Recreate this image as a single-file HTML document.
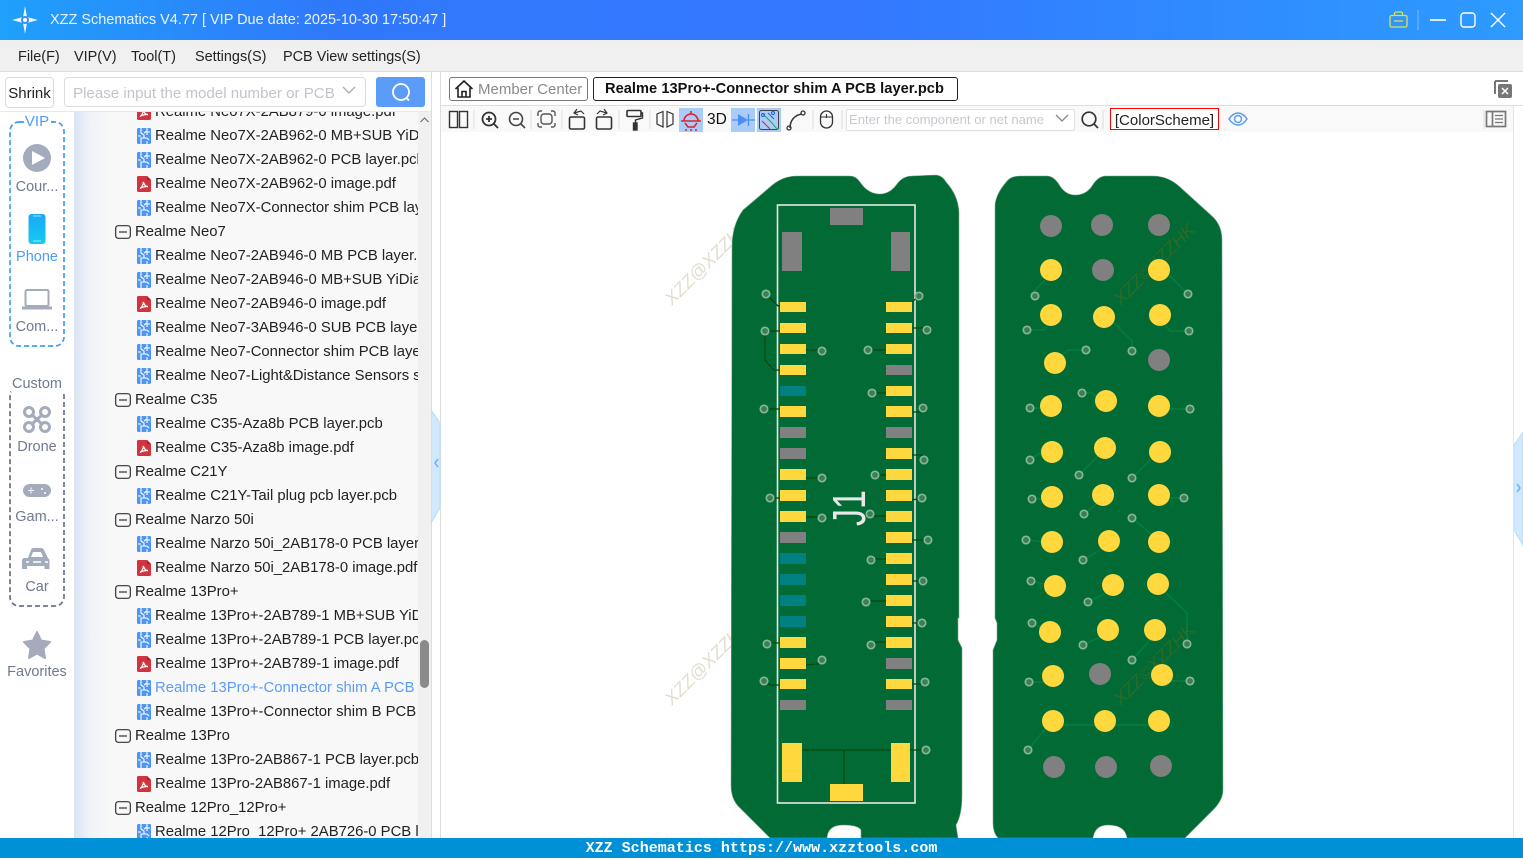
<!DOCTYPE html>
<html><head><meta charset="utf-8"><title>XZZ Schematics</title>
<style>
html,body{margin:0;padding:0;width:1523px;height:858px;overflow:hidden;background:#fff;font-family:"Liberation Sans","Noto Sans CJK SC",sans-serif}
.a{position:absolute;white-space:nowrap}
#title{left:0;top:0;width:1523px;height:40px;background:linear-gradient(90deg,#1fa0fb 0,#3078fb 22%,#3377ff 55%,#2d9bff 100%)}
#menu{left:0;top:40px;width:1523px;height:31px;background:#f0f0f0;border-bottom:1px solid #dcdcdc;font-size:14.45px;color:#222}
#menu span{position:absolute;top:9px}
#tree{left:74px;top:112px;width:344px;height:726px;overflow:hidden;background:linear-gradient(90deg,#dae3f3 0,#f1f3f8 16px,#f8f8f8 38px,#f8f8f8 100%)}
.r{position:absolute;font-size:14.85px;line-height:24px;height:24px;color:#222;white-space:nowrap;overflow:hidden;margin-top:1px}
.c{left:81px;width:263px}.f{left:41px}
.s{position:absolute;color:#6f7a90;font-size:14.5px;text-align:center;width:74px;left:0;margin-top:2px}
</style></head><body>
<svg width="0" height="0" style="position:absolute"><defs>
<symbol id="p" viewBox="0 0 14 16"><rect width="14" height="16" rx="1.5" fill="#4f95f5"/><path d="M4 0v5l3 2v3H4v6M10 0v3L7 5M13 4H10v3M7 10h3l2 2M1 8h3M10 16v-3" fill="none" stroke="#fff" stroke-width="1.1"/></symbol>
<symbol id="d" viewBox="0 0 14 16"><path d="M1.5 0H10l4 4v10.500a1.500 1.500 0 0 1-1.500 1.500h-11A1.500 1.500 0 0 1 0 14.500V1.500A1.500 1.500 0 0 1 1.500 0z" fill="#d1343f"/><path d="M10 0l4 4h-4z" fill="#a01f2a"/><path d="M3 12.500c2-1 3-4 3.500-6.500.5 3 2 4.500 4.500 4.500-3 0-6 .5-8 2z" fill="none" stroke="#fff" stroke-width="1.200"/></symbol>
<symbol id="m" viewBox="0 0 16 14"><rect x=".7" y=".7" width="14.600" height="12.600" rx="2.500" fill="none" stroke="#333" stroke-width="1.200"/><path d="M4 7h8" stroke="#333" stroke-width="1.200"/></symbol>
</defs></svg>

<div class="a" id="title"></div>
<svg class="a" style="left:0;top:0" width="60" height="40"><path d="M25 6l2 11 11 3-11 3-2 11-2-11-11-3 11-3z" fill="#eaf4ff"/><circle cx="25" cy="20" r="4" fill="#3a8df8"/><circle cx="25" cy="20" r="2" fill="#fff"/></svg>
<div class="a" style="left:50px;top:12px;color:#eaf3ff;font-size:14.48px">XZZ Schematics V4.77 [ VIP Due date: 2025-10-30 17:50:47 ]</div>
<svg class="a" style="left:1380px;top:0" width="143" height="40" fill="none"><path d="M11.500 15.500h14a1.500 1.500 0 0 1 1.500 1.500v8.500a1.500 1.500 0 0 1-1.500 1.500h-14a1.500 1.500 0 0 1-1.500-1.500V17a1.500 1.500 0 0 1 1.500-1.500zM14.500 15.500v-2a1.500 1.500 0 0 1 1.500-1.500h5a1.500 1.500 0 0 1 1.500 1.500v2M14 21h9" stroke="#d8e34a" stroke-width="1.300"/><path d="M38 10v20" stroke="#7dbcff"/><path d="M50 20h16" stroke="#fff" stroke-width="1.600"/><rect x="81" y="13" width="14" height="14" rx="3" stroke="#fff" stroke-width="1.400"/><path d="M111 13l14 14M125 13l-14 14" stroke="#fff" stroke-width="1.400"/></svg>

<div class="a" id="menu"><span style="left:18px">File(F)</span><span style="left:74px">VIP(V)</span><span style="left:131px">Tool(T)</span><span style="left:195px">Settings(S)</span><span style="left:283px">PCB View settings(S)</span></div>

<!-- left header -->
<div class="a" style="left:5px;top:77px;width:47px;height:29px;border:1px solid #dcdcdc;border-radius:4px;font-size:15px;line-height:31px;text-align:center;color:#222;box-sizing:content-box">Shrink</div>
<div class="a" style="left:64px;top:77px;width:300px;height:28px;border:1px solid #dcdcdc;border-radius:4px;font-size:15.1px;line-height:31px;color:#c0c4cc;text-indent:8px">Please input the model number or PCB</div>
<svg class="a" style="left:341px;top:85px" width="16" height="12"><path d="M2 2l6 6 6-6" fill="none" stroke="#aab" stroke-width="1.300"/></svg>
<div class="a" style="left:376px;top:77px;width:49px;height:30px;background:#5a9cf8;border-radius:3px"></div>
<svg class="a" style="left:388px;top:80px" width="26" height="24" fill="none"><circle cx="13" cy="12" r="8" stroke="#fff" stroke-width="1.800"/><path d="M18.500 18l2.500 2.500" stroke="#fff" stroke-width="1.800"/></svg>
<div class="a" style="left:0;top:111px;width:431px;height:1px;background:#e8e8e8"></div>

<!-- side nav -->
<div class="a" style="left:0;top:112px;width:74px;height:726px;background:#fff">
<svg class="a" style="left:0;top:0" width="74" height="500" fill="none" stroke-width="1.700" stroke-dasharray="5 3"><rect x="10" y="10" width="54" height="224" rx="9" stroke="#3d9bf5"/><rect x="10" y="275" width="54" height="219" rx="9" stroke="#687389"/></svg>
<div class="s" style="top:-1px;color:#4d9cf5;font-size:15px"><span style="background:#fff;padding:0 1px">VIP</span></div>
<div class="s" style="top:65px">Cour...</div>
<div class="s" style="top:135px;color:#4d9cf5">Phone</div>
<div class="s" style="top:205px">Com...</div>
<div class="s" style="top:262px;font-size:14.5px"><span style="background:#fff;padding:0 1px">Custom</span></div>
<div class="s" style="top:325px">Drone</div>
<div class="s" style="top:395px">Gam...</div>
<div class="s" style="top:465px">Car</div>
<div class="s" style="top:550px">Favorites</div>
</div>
<svg class="a" style="left:0;top:112px" width="74" height="726">
<circle cx="37" cy="46" r="14" fill="#a3abbd"/><path d="M32 39l13 7-13 7z" fill="#fff"/>
<defs><linearGradient id="ph" x1="0" y1="0" x2="0" y2="1"><stop offset="0" stop-color="#1ca8f8"/><stop offset="1" stop-color="#14cbf0"/></linearGradient></defs>
<rect x="28.500" y="102" width="17" height="30" rx="3" fill="url(#ph)"/><path d="M33 104h8M33 129h8" stroke="#9fe6ff"/>
<rect x="25.500" y="178" width="23" height="16" rx="1.500" fill="none" stroke="#a3abbd" stroke-width="2"/><path d="M22 196h30" stroke="#a3abbd" stroke-width="3"/>
<g fill="none" stroke="#a3abbd" stroke-width="3"><circle cx="29" cy="300" r="4.500"/><circle cx="45" cy="300" r="4.500"/><circle cx="29" cy="315" r="4.500"/><circle cx="45" cy="315" r="4.500"/><path d="M31 302l12 11M43 302l-12 11"/></g>
<rect x="23" y="372" width="28" height="13" rx="6.500" fill="#a3abbd"/><path d="M28 378.500h6M31 375.500v6" stroke="#fff"/><circle cx="42" cy="377" r="1" fill="#fff"/><circle cx="45" cy="381" r="1" fill="#fff"/>
<path d="M28 446l3-8q.5-2 3-2h7q2.500 0 3 2l4 8q1.500 1 1.500 3v8h-5v-3H27v3h-5v-8q0-2 1.500-3z" fill="#a3abbd"/><path d="M31 445l2-5h8l2 5z" fill="#fff"/><path d="M26 450h3M45 450h3M33 450h8" stroke="#fff" stroke-width="1.500"/>
<path d="M37 520l4 8.500 9 1.500-6.500 6.500 1.500 9.500-8-4.500-8 4.500 1.500-9.500-6.500-6.500 9-1.500z" fill="#a3abbd" stroke="#a3abbd" stroke-width="2" stroke-linejoin="round"/>
</svg>

<!-- tree -->
<div class="a" id="tree">
<div class="r c" style="top:-13px"><svg width="14" height="16" style="position:absolute;left:-18px;top:4px"><use href="#d"/></svg>Realme Neo7X-2AB879-0 image.pdf</div>
<div class="r c" style="top:11px"><svg width="14" height="16" style="position:absolute;left:-18px;top:4px"><use href="#p"/></svg>Realme Neo7X-2AB962-0 MB+SUB YiDiagram layer.pcb</div>
<div class="r c" style="top:35px"><svg width="14" height="16" style="position:absolute;left:-18px;top:4px"><use href="#p"/></svg>Realme Neo7X-2AB962-0 PCB layer.pcb</div>
<div class="r c" style="top:59px"><svg width="14" height="16" style="position:absolute;left:-18px;top:4px"><use href="#d"/></svg>Realme Neo7X-2AB962-0 image.pdf</div>
<div class="r c" style="top:83px"><svg width="14" height="16" style="position:absolute;left:-18px;top:4px"><use href="#p"/></svg>Realme Neo7X-Connector shim PCB layer.pcb</div>
<div class="r f" style="top:107px;padding-left:20px"><svg width="16" height="14" style="position:absolute;left:0;top:5px"><use href="#m"/></svg>Realme Neo7</div>
<div class="r c" style="top:131px"><svg width="14" height="16" style="position:absolute;left:-18px;top:4px"><use href="#p"/></svg>Realme Neo7-2AB946-0 MB PCB layer.pcb</div>
<div class="r c" style="top:155px"><svg width="14" height="16" style="position:absolute;left:-18px;top:4px"><use href="#p"/></svg>Realme Neo7-2AB946-0 MB+SUB YiDiagram.pcb</div>
<div class="r c" style="top:179px"><svg width="14" height="16" style="position:absolute;left:-18px;top:4px"><use href="#d"/></svg>Realme Neo7-2AB946-0 image.pdf</div>
<div class="r c" style="top:203px"><svg width="14" height="16" style="position:absolute;left:-18px;top:4px"><use href="#p"/></svg>Realme Neo7-3AB946-0 SUB PCB layer.pcb</div>
<div class="r c" style="top:227px"><svg width="14" height="16" style="position:absolute;left:-18px;top:4px"><use href="#p"/></svg>Realme Neo7-Connector shim PCB layer.pcb</div>
<div class="r c" style="top:251px"><svg width="14" height="16" style="position:absolute;left:-18px;top:4px"><use href="#p"/></svg>Realme Neo7-Light&amp;Distance Sensors shim.pcb</div>
<div class="r f" style="top:275px;padding-left:20px"><svg width="16" height="14" style="position:absolute;left:0;top:5px"><use href="#m"/></svg>Realme C35</div>
<div class="r c" style="top:299px"><svg width="14" height="16" style="position:absolute;left:-18px;top:4px"><use href="#p"/></svg>Realme C35-Aza8b PCB layer.pcb</div>
<div class="r c" style="top:323px"><svg width="14" height="16" style="position:absolute;left:-18px;top:4px"><use href="#d"/></svg>Realme C35-Aza8b image.pdf</div>
<div class="r f" style="top:347px;padding-left:20px"><svg width="16" height="14" style="position:absolute;left:0;top:5px"><use href="#m"/></svg>Realme C21Y</div>
<div class="r c" style="top:371px"><svg width="14" height="16" style="position:absolute;left:-18px;top:4px"><use href="#p"/></svg>Realme C21Y-Tail plug pcb layer.pcb</div>
<div class="r f" style="top:395px;padding-left:20px"><svg width="16" height="14" style="position:absolute;left:0;top:5px"><use href="#m"/></svg>Realme Narzo 50i</div>
<div class="r c" style="top:419px"><svg width="14" height="16" style="position:absolute;left:-18px;top:4px"><use href="#p"/></svg>Realme Narzo 50i_2AB178-0 PCB layer.pcb</div>
<div class="r c" style="top:443px"><svg width="14" height="16" style="position:absolute;left:-18px;top:4px"><use href="#d"/></svg>Realme Narzo 50i_2AB178-0 image.pdf</div>
<div class="r f" style="top:467px;padding-left:20px"><svg width="16" height="14" style="position:absolute;left:0;top:5px"><use href="#m"/></svg>Realme 13Pro+</div>
<div class="r c" style="top:491px"><svg width="14" height="16" style="position:absolute;left:-18px;top:4px"><use href="#p"/></svg>Realme 13Pro+-2AB789-1 MB+SUB YiDiagram.pcb</div>
<div class="r c" style="top:515px"><svg width="14" height="16" style="position:absolute;left:-18px;top:4px"><use href="#p"/></svg>Realme 13Pro+-2AB789-1 PCB layer.pcb</div>
<div class="r c" style="top:539px"><svg width="14" height="16" style="position:absolute;left:-18px;top:4px"><use href="#d"/></svg>Realme 13Pro+-2AB789-1 image.pdf</div>
<div class="r c" style="top:563px;color:#5b9bf9"><svg width="14" height="16" style="position:absolute;left:-18px;top:4px"><use href="#p"/></svg>Realme 13Pro+-Connector shim A PCB layer.pcb</div>
<div class="r c" style="top:587px"><svg width="14" height="16" style="position:absolute;left:-18px;top:4px"><use href="#p"/></svg>Realme 13Pro+-Connector shim B PCB layer.pcb</div>
<div class="r f" style="top:611px;padding-left:20px"><svg width="16" height="14" style="position:absolute;left:0;top:5px"><use href="#m"/></svg>Realme 13Pro</div>
<div class="r c" style="top:635px"><svg width="14" height="16" style="position:absolute;left:-18px;top:4px"><use href="#p"/></svg>Realme 13Pro-2AB867-1 PCB layer.pcb</div>
<div class="r c" style="top:659px"><svg width="14" height="16" style="position:absolute;left:-18px;top:4px"><use href="#d"/></svg>Realme 13Pro-2AB867-1 image.pdf</div>
<div class="r f" style="top:683px;padding-left:20px"><svg width="16" height="14" style="position:absolute;left:0;top:5px"><use href="#m"/></svg>Realme 12Pro_12Pro+</div>
<div class="r c" style="top:707px"><svg width="14" height="16" style="position:absolute;left:-18px;top:4px"><use href="#p"/></svg>Realme 12Pro_12Pro+ 2AB726-0 PCB layer.pcb</div>
</div>
<style>.c svg{left:-18px!important}.c{overflow:visible!important}.c{clip-path:inset(0 0 0 -20px)}</style>
<div class="a" style="left:418px;top:112px;width:13px;height:726px;background:#f0f0f0"></div>
<svg class="a" style="left:418px;top:112px" width="13" height="16"><path d="M2.500 10l4-4 4 4" fill="none" stroke="#666"/></svg>
<div class="a" style="left:420px;top:640px;width:9px;height:48px;background:#8a8a8a;border-radius:5px"></div>
<div class="a" style="left:431px;top:72px;width:1px;height:766px;background:#dedede"></div>
<div class="a" style="left:440px;top:72px;width:1px;height:766px;background:#dedede"></div>
<svg class="a" style="left:431px;top:405px" width="10" height="120"><path d="M0 5l9 13v85l-9 15z" fill="#d2e8fd" stroke="#b5dcfd"/><path d="M7 54l-3 4 3 4" fill="none" stroke="#6bb2f5" stroke-width="1.500"/></svg>
<svg class="a" style="left:1513px;top:430px" width="10" height="120"><path d="M10 2l-9 13v85l9 15z" fill="#d2e8fd" stroke="#b5dcfd"/><path d="M4 54l3 4-3 4" fill="none" stroke="#6bb2f5" stroke-width="1.500"/></svg>
<div class="a" style="left:1513px;top:105px;width:1px;height:733px;background:#e4e4e4"></div>

<!-- tabs -->
<div class="a" style="left:441px;top:105px;width:1082px;height:1px;background:#dedede"></div>
<div class="a" style="left:441px;top:106px;width:1072px;height:26px;background:#f9f9f9"></div>
<div class="a" style="left:449px;top:77px;width:137px;height:22px;border:1px solid #777;border-radius:3px;font-size:15px;line-height:23px;color:#8a8a8a;text-indent:28px">Member Center</div>
<svg class="a" style="left:454px;top:79px" width="20" height="20" fill="none" stroke="#222" stroke-width="1.600"><path d="M1.500 10L10 2l8.500 8M4 8.500V18h12V8.500M8 18v-5.500h4V18"/></svg>
<div class="a" style="left:593px;top:77px;width:363px;height:22px;border:1px solid #222;border-radius:3px;font-size:14.6px;line-height:23px;color:#111;font-weight:bold;text-indent:11px;letter-spacing:.05px">Realme 13Pro+-Connector shim A PCB layer.pcb</div>
<svg class="a" style="left:1492px;top:78px" width="22" height="22"><path d="M3 3h13M3 3v13" fill="none" stroke="#777" stroke-width="2"/><rect x="6" y="6" width="14" height="14" rx="2" fill="#777"/><path d="M10 10l6 6M16 10l-6 6" stroke="#fff" stroke-width="1.500"/></svg>

<!-- toolbar -->
<svg class="a" style="left:441px;top:106px" width="1072" height="26" fill="none" stroke="#333" stroke-width="1.400">
<rect x="8.500" y="5.500" width="8" height="16"/><rect x="18.500" y="5.500" width="8" height="16"/>
<g stroke="#ddd" stroke-width="1"><path d="M33 4v19M90 4v19M121 4v19M178 4v19M209 4v19M372 4v19M401 4v19M662 4v19M1043 4v19"/></g>
<circle cx="48" cy="13" r="6.500" stroke-width="1.800"/><path d="M53 18l4 4M45 13h6M48 10v6" stroke-width="1.800"/>
<circle cx="75" cy="13" r="6.500" stroke="#444" stroke-width="1.600"/><path d="M80 18l4 4M72 13h6" stroke="#444" stroke-width="1.600"/>
<path d="M97 10V7a2 2 0 0 1 2-2h2M110 5h2a2 2 0 0 1 2 2v3M114 17v2a2 2 0 0 1-2 2h-2M101 21h-2a2 2 0 0 1-2-2v-2" stroke="#555"/><rect x="100" y="8" width="11" height="10" rx="3" stroke="#555"/>
<rect x="128.500" y="11" width="15" height="12" rx="1.500" stroke-width="1.600"/><path d="M133 7l7-2 3 3M136 3l-3 4 4 2" stroke-width="1.200"/>
<rect x="155.500" y="11" width="15" height="12" rx="1.500" stroke-width="1.600"/><path d="M166 7l-7-2-3 3M163 3l3 4-4 2" stroke-width="1.200"/>
<rect x="186" y="4.500" width="14" height="6" rx="1" stroke-width="1.600"/><path d="M200 7h1.500v5l-7 2v3" stroke-width="1.400"/><rect x="192.500" y="17" width="3.500" height="7" fill="#333"/>
<path d="M222 5.500l-6 2.500v10l6 3zM226 5.500l6 2.500v10l-6 3z" stroke-width="1.200"/>
<rect x="238" y="2" width="24" height="25" fill="#aaccf8" stroke="none"/>
<path d="M240 15h20M243 15a7 7 0 0 1 14 0M244 17l3 4h6l3-4M250 5v3" stroke="#e0202a" stroke-width="1.600"/><path d="M244 24h2M249 24h2M254 24h2" stroke="#e0202a"/>
<rect x="290" y="2" width="24" height="24" fill="#aaccf8" stroke="none"/><path d="M291 14h6M308 14h6" stroke="#4d8ff0" stroke-width="1.300"/><path d="M297 8l10 6-10 6z" fill="#4d8ff0" stroke="none"/><path d="M307.500 8v12" stroke="#4d8ff0"/>
<rect x="316" y="2" width="24" height="24" fill="#aaccf8" stroke="none"/><rect x="318.500" y="4.500" width="19" height="19" rx="2" stroke="#444" stroke-width="1"/><path d="M322 8l9 9 5 6" stroke="#20b040" stroke-width="1"/><path d="M321 15l8 8" stroke="#e0202a" stroke-width="1"/><path d="M327 7l6 6" stroke="#2060d0" stroke-width="1"/><circle cx="322" cy="9" r="1.500" stroke="#2060d0" stroke-width="1"/><circle cx="332" cy="7" r="1.500" stroke="#2060d0" stroke-width="1"/>
<path d="M349 22c0-8 5-13 12-14" stroke-width="1.500"/><circle cx="348" cy="22" r="2" stroke-width="1.300"/><circle cx="362" cy="7" r="2" stroke-width="1.300"/>
<rect x="379.500" y="5" width="12" height="17" rx="6" stroke-width="1.300"/><path d="M379.500 11h12M385.500 8v4" stroke-width="1.100"/>
</svg>
<div class="a" style="left:707px;top:111px;font-size:15.5px;color:#111">3D</div>
<div class="a" style="left:846px;top:109px;width:227px;height:20px;border:1px solid #e0e0e0;background:#fff;border-radius:2px;font-size:13.1px;line-height:19px;color:#c6c9d0;text-indent:2px">Enter the component or net name</div>
<svg class="a" style="left:1053px;top:112px" width="18" height="14"><path d="M3 3l6 6 6-6" fill="none" stroke="#888" stroke-width="1.300"/></svg>
<svg class="a" style="left:1079px;top:109px" width="22" height="22" fill="none" stroke="#333" stroke-width="1.700"><circle cx="10" cy="10" r="6.800"/><path d="M15 15l4 4"/></svg>
<div class="a" style="left:1110px;top:108px;width:107px;height:20px;border:1px solid #f00;font-size:15px;line-height:23px;color:#222;text-align:center;background:#fff">[ColorScheme]</div>
<svg class="a" style="left:1227px;top:108px" width="22" height="22" fill="none" stroke="#5b9bf0" stroke-width="1.500"><path d="M2 11c3-4.500 6-6 9-6s6 1.500 9 6c-3 4.500-6 6-9 6s-6-1.500-9-6z"/><circle cx="11" cy="11" r="3.500"/></svg>
<svg class="a" style="left:1485px;top:109px" width="22" height="20" fill="none" stroke="#777" stroke-width="1.700"><rect x="1.500" y="2.500" width="19" height="15"/><path d="M7.500 2.500v15"/><path d="M10 6.500h8M10 10h8M10 13.500h8" stroke-width="1.300"/></svg>

<!-- PCB -->
<svg class="a" style="left:441px;top:132px" width="1072" height="706" viewBox="441 132 1072 706">
<g font-family="Liberation Sans,sans-serif" font-size="18" font-style="italic" fill="#e2decf">
<text x="0" y="0" transform="translate(672,306) rotate(-45)">XZZ@XZZHK</text>
<text x="0" y="0" transform="translate(672,706) rotate(-45)">XZZ@XZZHK</text>
</g>
<path d="M797 176H850Q856 176 860 182Q868 194 880 194Q890 194 897 184Q903 176 912 176L935 175Q942 175 946 182Q958 195 959 212V618H958V640L962 648V795Q962 815 956 825L958 838H861V830Q858 825 843 825Q828 825 827 838H770L740 808Q731 800 731 785L732 247Q732 225 743 210L770 187Q782 176 797 176Z" fill="#026a35" stroke="#7ea98f" stroke-width=".6"/>
<path d="M1020 176H1047Q1054 176 1060 186Q1066 195 1075 195Q1086 195 1092 186Q1098 176 1106 176H1153Q1168 176 1180 187L1213 217Q1222 226 1222 240L1223 790Q1223 800 1213 810L1185 838H1127Q1125 825 1108 825Q1095 825 1093 838H998Q993 833 993 823V650L997 640V623L995 618V205Q996 193 1008 180Q1012 176 1020 176Z" fill="#026a35" stroke="#7ea98f" stroke-width=".6"/>
<g font-family="Liberation Sans,sans-serif" font-size="18" font-style="italic" fill="#2c6a28">
<text transform="translate(1121,306) rotate(-45)">XZZ©XZZHK</text>
<text transform="translate(1121,706) rotate(-45)">XZZ©XZZHK</text>
</g>
<rect x="777.500" y="205" width="137.500" height="598" fill="none" stroke="#e8e8e8" stroke-width="1.600"/>
<g fill="none" stroke="#034a0c" stroke-width="1.300">
<path d="M766 294L778 306H780M765 331H780M765 331V360L774 370H780M806 350H822M868 350H886M912 302L919 296M912 328H927M872 393H886M764 409H780M912 412H921L923 408M912 455H922V460M875 475H886M806 478H822M770 498H780M912 500L922 498M806 517H822M870 516H886M912 540H928M871 559H886M912 581H923M866 601H886M912 623H922M871 645L875 642H886M767 643H780M806 665L818 664L822 660M764 681L770 685H780M912 684H925M910 750H926M802 750H891M844 750V784"/>
</g>
<g fill="#ffd83d"><rect x="780" y="302" width="26" height="10"/><rect x="780" y="323" width="26" height="10"/><rect x="780" y="344" width="26" height="10"/><rect x="780" y="365" width="26" height="10"/><rect x="780" y="406" width="26" height="11"/><rect x="780" y="469" width="26" height="11"/><rect x="780" y="490" width="26" height="11"/><rect x="780" y="511" width="26" height="11"/><rect x="780" y="637" width="26" height="11"/><rect x="780" y="658" width="26" height="11"/><rect x="780" y="679" width="26" height="10"/>
<rect x="886" y="302" width="26" height="10"/><rect x="886" y="323" width="26" height="10"/><rect x="886" y="344" width="26" height="10"/><rect x="886" y="386" width="26" height="10"/><rect x="886" y="406" width="26" height="11"/><rect x="886" y="448" width="26" height="11"/><rect x="886" y="469" width="26" height="11"/><rect x="886" y="490" width="26" height="11"/><rect x="886" y="511" width="26" height="11"/><rect x="886" y="532" width="26" height="11"/><rect x="886" y="553" width="26" height="11"/><rect x="886" y="574" width="26" height="11"/><rect x="886" y="595" width="26" height="11"/><rect x="886" y="616" width="26" height="11"/><rect x="886" y="637" width="26" height="11"/><rect x="886" y="679" width="26" height="10"/>
<rect x="782" y="743" width="20" height="39"/><rect x="891" y="743" width="19" height="39"/><rect x="830" y="784" width="33" height="17"/></g>
<g fill="#808080"><rect x="780" y="427" width="26" height="11"/><rect x="780" y="448" width="26" height="11"/><rect x="780" y="532" width="26" height="11"/><rect x="780" y="700" width="26" height="10"/><rect x="886" y="365" width="26" height="10"/><rect x="886" y="427" width="26" height="11"/><rect x="886" y="658" width="26" height="11"/><rect x="886" y="700" width="26" height="10"/><rect x="830" y="208" width="33" height="17"/><rect x="782" y="232" width="20" height="39"/><rect x="891" y="232" width="19" height="39"/></g>
<g fill="#008080"><rect x="780" y="386" width="26" height="10"/><rect x="780" y="553" width="26" height="11"/><rect x="780" y="574" width="26" height="11"/><rect x="780" y="595" width="26" height="11"/><rect x="780" y="616" width="26" height="11"/></g>
<text transform="translate(865,526) rotate(-90)" font-family="Liberation Sans,sans-serif" font-size="46" fill="#e8e8e8" textLength="36" lengthAdjust="spacingAndGlyphs">J1</text>

<g fill="none" stroke="#008040" stroke-width="1.400">
<path d="M1035 296V290L1045 280M1188 294L1170 276M1027 330H1044L1048 325M1189 331H1170L1165 325M1132 351V341L1114 323M1086 350H1068L1060 358M1082 393H1092L1098 398M1030 408H1045M1190 409H1165M1030 460L1040 453H1045M1079 475L1098 456M1132 478L1150 460M1032 499H1045M1184 498H1165M1084 514L1098 503M1132 518L1152 535M1026 540L1045 542M1083 560L1100 550M1031 581L1048 585M1088 602L1108 592M1032 623L1042 628M1083 645L1100 637M1132 660L1150 640M1187 644V613L1165 592M1029 682H1045M1190 681H1170M1028 750L1046 728M1053 725H1159"/>
</g>
<g fill="#ffd83d"><circle cx="1051" cy="270" r="11"/><circle cx="1159" cy="270" r="11"/><circle cx="1051" cy="315" r="11"/><circle cx="1104" cy="317" r="11"/><circle cx="1160" cy="315" r="11"/><circle cx="1055" cy="363" r="11"/><circle cx="1051" cy="406" r="11"/><circle cx="1106" cy="401" r="11"/><circle cx="1159" cy="406" r="11"/><circle cx="1052" cy="452" r="11"/><circle cx="1105" cy="448" r="11"/><circle cx="1160" cy="452" r="11"/><circle cx="1052" cy="497" r="11"/><circle cx="1103" cy="495" r="11"/><circle cx="1159" cy="495" r="11"/><circle cx="1052" cy="542" r="11"/><circle cx="1109" cy="541" r="11"/><circle cx="1159" cy="542" r="11"/><circle cx="1055" cy="586" r="11"/><circle cx="1113" cy="585" r="11"/><circle cx="1158" cy="584" r="11"/><circle cx="1050" cy="632" r="11"/><circle cx="1108" cy="630" r="11"/><circle cx="1155" cy="630" r="11"/><circle cx="1053" cy="676" r="11"/><circle cx="1162" cy="675" r="11"/><circle cx="1053" cy="721" r="11"/><circle cx="1105" cy="721" r="11"/><circle cx="1159" cy="721" r="11"/></g>
<g fill="#808080"><circle cx="1051" cy="226" r="11"/><circle cx="1102" cy="225" r="11"/><circle cx="1159" cy="225" r="11"/><circle cx="1103" cy="270" r="11"/><circle cx="1159" cy="360" r="11"/><circle cx="1100" cy="674" r="11"/><circle cx="1054" cy="767" r="11"/><circle cx="1106" cy="767" r="11"/><circle cx="1161" cy="766" r="11"/></g>
<g fill="#3a7f50" stroke="#86b49c" stroke-width="1.700">
<circle cx="766" cy="294" r="3.700"/><circle cx="765" cy="331" r="3.700"/><circle cx="822" cy="351" r="3.700"/><circle cx="868" cy="350" r="3.700"/><circle cx="919" cy="296" r="3.700"/><circle cx="927" cy="330" r="3.700"/><circle cx="872" cy="393" r="3.700"/><circle cx="764" cy="409" r="3.700"/><circle cx="923" cy="408" r="3.700"/><circle cx="924" cy="460" r="3.700"/><circle cx="875" cy="475" r="3.700"/><circle cx="822" cy="478" r="3.700"/><circle cx="770" cy="498" r="3.700"/><circle cx="922" cy="498" r="3.700"/><circle cx="822" cy="518" r="3.700"/><circle cx="870" cy="514" r="3.700"/><circle cx="928" cy="540" r="3.700"/><circle cx="871" cy="560" r="3.700"/><circle cx="923" cy="581" r="3.700"/><circle cx="866" cy="602" r="3.700"/><circle cx="922" cy="623" r="3.700"/><circle cx="871" cy="645" r="3.700"/><circle cx="767" cy="644" r="3.700"/><circle cx="822" cy="660" r="3.700"/><circle cx="764" cy="681" r="3.700"/><circle cx="925" cy="682" r="3.700"/><circle cx="926" cy="750" r="3.700"/>
<circle cx="1035" cy="296" r="3.700"/><circle cx="1188" cy="294" r="3.700"/><circle cx="1027" cy="330" r="3.700"/><circle cx="1189" cy="331" r="3.700"/><circle cx="1132" cy="351" r="3.700"/><circle cx="1086" cy="350" r="3.700"/><circle cx="1082" cy="393" r="3.700"/><circle cx="1030" cy="408" r="3.700"/><circle cx="1190" cy="409" r="3.700"/><circle cx="1030" cy="460" r="3.700"/><circle cx="1079" cy="475" r="3.700"/><circle cx="1132" cy="478" r="3.700"/><circle cx="1032" cy="499" r="3.700"/><circle cx="1184" cy="498" r="3.700"/><circle cx="1084" cy="514" r="3.700"/><circle cx="1132" cy="518" r="3.700"/><circle cx="1026" cy="540" r="3.700"/><circle cx="1083" cy="560" r="3.700"/><circle cx="1031" cy="581" r="3.700"/><circle cx="1088" cy="602" r="3.700"/><circle cx="1032" cy="623" r="3.700"/><circle cx="1083" cy="645" r="3.700"/><circle cx="1132" cy="660" r="3.700"/><circle cx="1187" cy="644" r="3.700"/><circle cx="1029" cy="682" r="3.700"/><circle cx="1190" cy="681" r="3.700"/><circle cx="1028" cy="750" r="3.700"/>
</g>
</svg>

<!-- status -->
<div class="a" style="left:0;top:838px;width:1523px;height:20px;background:#0090d8;color:#fff;font-family:'Liberation Mono',monospace;font-weight:bold;font-size:15px;line-height:22px;text-align:center;letter-spacing:.02px">XZZ Schematics https://www.xzztools.com</div>
</body></html>
